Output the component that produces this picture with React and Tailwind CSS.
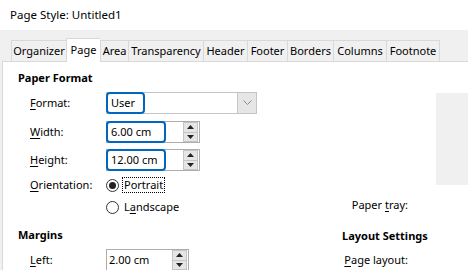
import React from "react";

const tabs = [
  { label: "Organizer", w: "w-[55px]" },
  { label: "Page", w: "w-[34px]", active: true },
  { label: "Area", w: "w-[28px]" },
  { label: "Transparency", w: "w-[75px]" },
  { label: "Header", w: "w-[44px]" },
  { label: "Footer", w: "w-[40px]" },
  { label: "Borders", w: "w-[46px]" },
  { label: "Columns", w: "w-[53px]" },
  { label: "Footnote", w: "w-[54px]", last: true },
];

const U = ({ children }) => <span className="underline underline-offset-2">{children}</span>;

const SpinButtons = () => (
  <div className="flex flex-col w-[15px] h-[20px] mr-px">
    <div className="flex-1 flex items-center justify-center bg-[#e5e5e5] border border-[#c4c4c4]">
      <svg width="7" height="4" viewBox="0 0 7 4">
        <path d="M3.5 0 L7 4 L0 4 Z" fill="#222" />
      </svg>
    </div>
    <div className="flex-1 flex items-center justify-center bg-[#e5e5e5] border border-t-0 border-[#c4c4c4]">
      <svg width="7" height="4" viewBox="0 0 7 4">
        <path d="M0 0 L7 0 L3.5 4 Z" fill="#222" />
      </svg>
    </div>
  </div>
);

const SpinField = ({ value, focused, outer, field }) => (
  <div className={`flex items-center justify-between h-[22px] border border-[#adadad] bg-white ${outer}`}>
    <div
      className={`h-[22px] -ml-px -my-px flex items-center pl-[3px] ${field} ${
        focused ? "border-2 border-[#0067c0] rounded-[4px]" : ""
      }`}
    >
      {value}
    </div>
    <SpinButtons />
  </div>
);

const Radio = ({ checked }) => (
  <div className="w-[13px] h-[13px] rounded-full border border-[#333] bg-white flex items-center justify-center">
    {checked && <div className="w-[7px] h-[7px] rounded-full bg-[#222]" />}
  </div>
);

const App = () => {
  return (
    <div
      className="w-[468px] h-[270px] overflow-hidden bg-[#f0f0f0] flex flex-col text-[11px] text-black leading-[16px]"
      style={{ fontFamily: '"Noto Sans", "Open Sans", sans-serif' }}
    >
      <div className="h-[30px] bg-white flex items-center pl-[10px] text-[11.5px] shrink-0">
        Page Style: Untitled1
      </div>
      <div className="h-[31px] flex items-end pl-[11px] shrink-0">
        {tabs.map((t) =>
          t.active ? (
            <div
              key={t.label}
              className={`${t.w} h-[24px] -mb-px relative z-10 bg-white border-t border-l border-[#d9d9d9] flex items-start pt-[3px] justify-center`}
            >
              {t.label}
            </div>
          ) : (
            <div
              key={t.label}
              className={`${t.w} h-[21px] border-t border-l ${t.last ? "border-r" : ""} border-[#d9d9d9] flex items-center justify-center`}
            >
              {t.label}
            </div>
          )
        )}
      </div>
      <div className="flex-1 ml-[2px] bg-white border-t border-l border-[#d9d9d9] flex pl-[15px]">
        <div className="w-[324px] shrink-0 flex flex-col">
          <div className="mt-[8px] font-bold">Paper Format</div>
          <div className="mt-[6px] flex items-center h-[22px]">
            <div className="w-[88px] pl-[12px]">
              <U>F</U>ormat:
            </div>
            <div className="w-[151px] h-[22px] border border-[#c4c4c4] flex items-center justify-between">
              <div className="w-[39px] h-[22px] -ml-px -my-px border-2 border-[#0067c0] rounded-[4px] flex items-center pl-[3px]">
                User
              </div>
              <div className="w-[19px] h-[20px] bg-[#e6e6e6] border-l border-[#c4c4c4] flex items-center justify-center">
                <svg width="9" height="6" viewBox="0 0 9 6">
                  <path d="M0.5 0.5 L4.5 4.5 L8.5 0.5" fill="none" stroke="#8a8a8a" strokeWidth="1" />
                </svg>
              </div>
            </div>
          </div>
          <div className="mt-[7px] flex items-center h-[22px]">
            <div className="w-[88px] pl-[12px]">
              <U>W</U>idth:
            </div>
            <SpinField value="6.00 cm" focused outer="w-[94px]" field="w-[60px]" />
          </div>
          <div className="mt-[6px] flex items-center h-[22px]">
            <div className="w-[88px] pl-[12px]">
              <U>H</U>eight:
            </div>
            <SpinField value="12.00 cm" focused outer="w-[94px]" field="w-[60px]" />
          </div>
          <div className="mt-[4px] flex items-center h-[20px]">
            <div className="w-[88px] pl-[12px]">
              <U>O</U>rientation:
            </div>
            <Radio checked />
            <div className="ml-[4px] outline outline-1 outline-dotted outline-black px-px leading-[14px]">Portrait</div>
          </div>
          <div className="mt-[2px] flex items-center h-[20px]">
            <div className="w-[88px]" />
            <Radio />
            <div className="ml-[5px]">
              L<U>a</U>ndscape
            </div>
          </div>
          <div className="mt-[10px] font-bold">Margins</div>
          <div className="mt-[6px] flex items-center h-[22px]">
            <div className="w-[88px] pl-[12px]">
              <U>L</U>eft:
            </div>
            <SpinField value="2.00 cm" outer="w-[83px]" field="w-[60px]" />
          </div>
        </div>
        <div className="w-[126px] shrink-0 flex flex-col">
          <div className="mt-[31px] ml-[94px] w-[32px] h-[92px] bg-[#f0f0f0]" />
          <div className="mt-[12px] w-[66px] text-right whitespace-nowrap">
            Paper <U>t</U>ray:
          </div>
          <div className="mt-[15px] font-bold whitespace-nowrap">Layout Settings</div>
          <div className="mt-[8px] w-[66px] text-right whitespace-nowrap">
            <U>P</U>age layout:
          </div>
        </div>
      </div>
    </div>
  );
};

export default App;
